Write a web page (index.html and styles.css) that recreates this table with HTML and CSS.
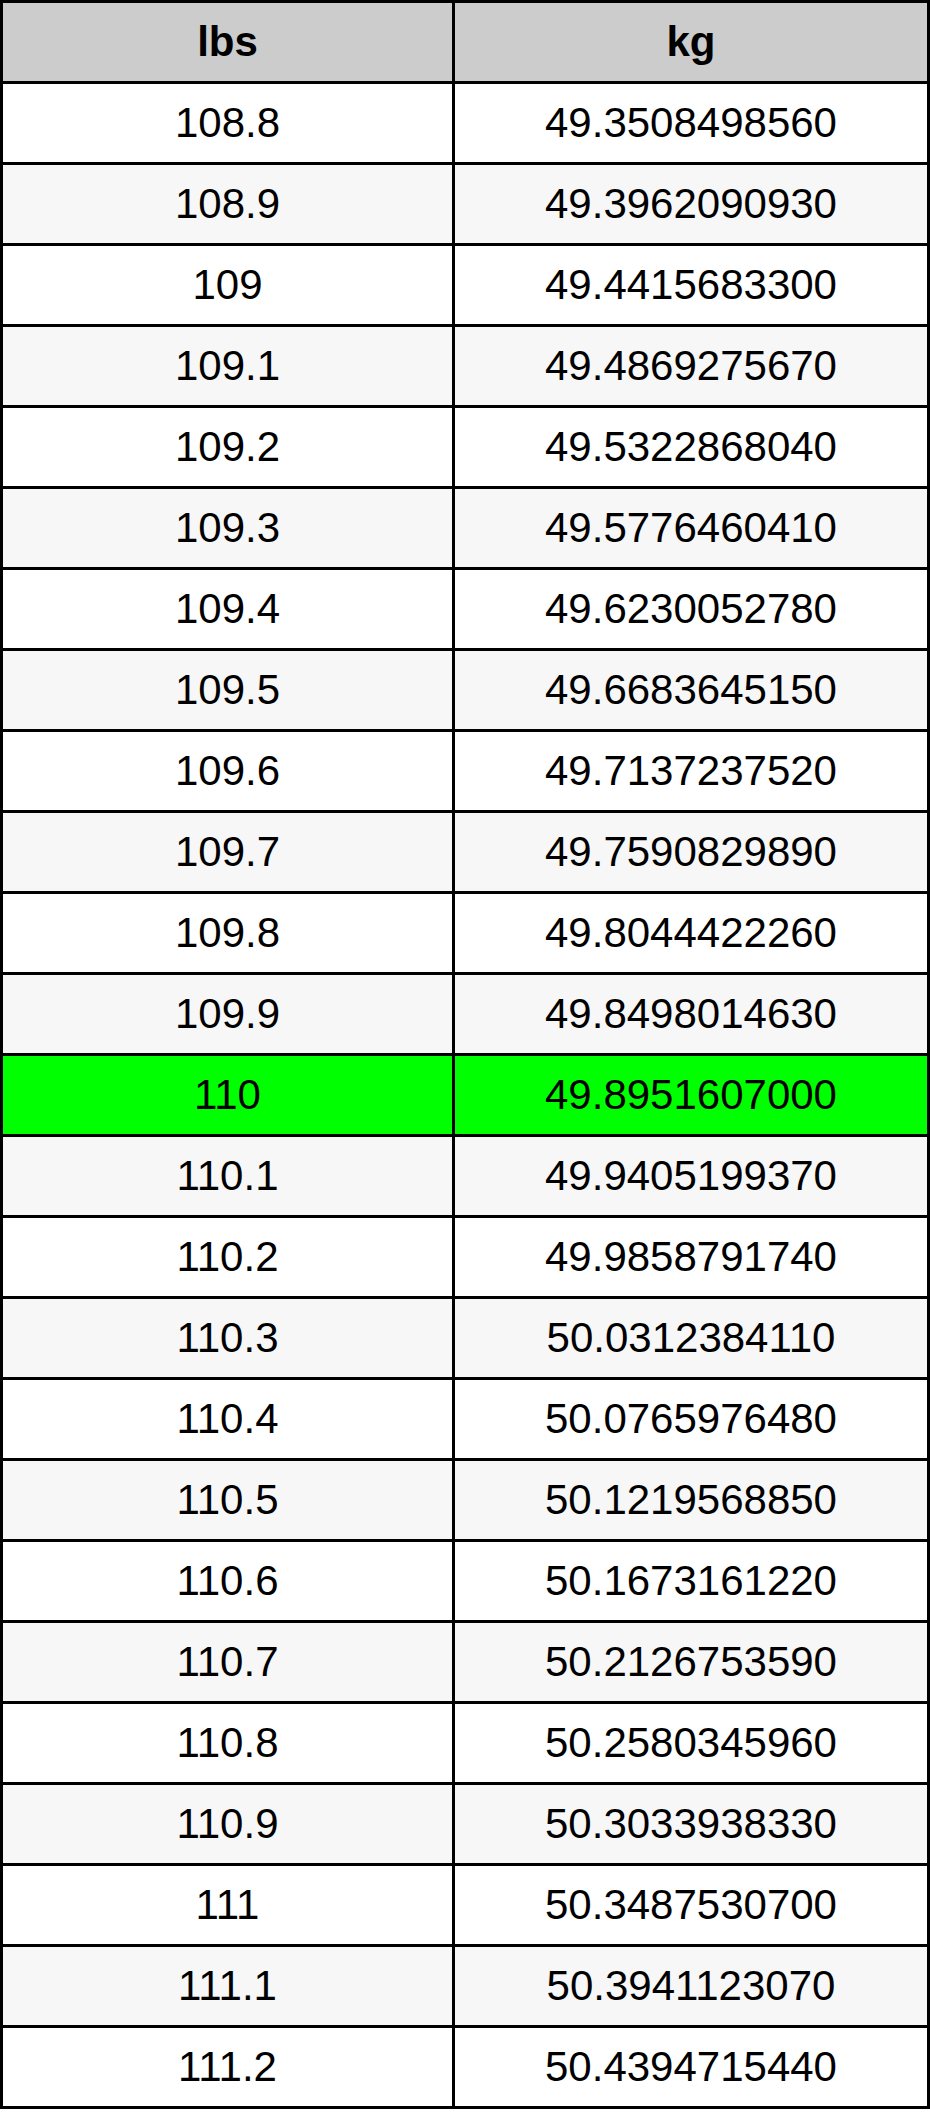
FILE: index.html
```html
<!DOCTYPE html>
<html lang="en">
<head>
<meta charset="utf-8">
<title>lbs to kg</title>
<link rel="stylesheet" href="styles.css">
</head>
<body>
<table class="conv">
<thead>
<tr><th class="c1">lbs</th><th class="c2">kg</th></tr>
</thead>
<tbody>
<tr><td>108.8</td><td>49.3508498560</td></tr>
<tr class="alt"><td>108.9</td><td>49.3962090930</td></tr>
<tr><td>109</td><td>49.4415683300</td></tr>
<tr class="alt"><td>109.1</td><td>49.4869275670</td></tr>
<tr><td>109.2</td><td>49.5322868040</td></tr>
<tr class="alt"><td>109.3</td><td>49.5776460410</td></tr>
<tr><td>109.4</td><td>49.6230052780</td></tr>
<tr class="alt"><td>109.5</td><td>49.6683645150</td></tr>
<tr><td>109.6</td><td>49.7137237520</td></tr>
<tr class="alt"><td>109.7</td><td>49.7590829890</td></tr>
<tr><td>109.8</td><td>49.8044422260</td></tr>
<tr class="alt"><td>109.9</td><td>49.8498014630</td></tr>
<tr class="hl"><td>110</td><td>49.8951607000</td></tr>
<tr class="alt"><td>110.1</td><td>49.9405199370</td></tr>
<tr><td>110.2</td><td>49.9858791740</td></tr>
<tr class="alt"><td>110.3</td><td>50.0312384110</td></tr>
<tr><td>110.4</td><td>50.0765976480</td></tr>
<tr class="alt"><td>110.5</td><td>50.1219568850</td></tr>
<tr><td>110.6</td><td>50.1673161220</td></tr>
<tr class="alt"><td>110.7</td><td>50.2126753590</td></tr>
<tr><td>110.8</td><td>50.2580345960</td></tr>
<tr class="alt"><td>110.9</td><td>50.3033938330</td></tr>
<tr><td>111</td><td>50.3487530700</td></tr>
<tr class="alt"><td>111.1</td><td>50.3941123070</td></tr>
<tr><td>111.2</td><td>50.4394715440</td></tr>
</tbody>
</table>
</body>
</html>
```
FILE: styles.css
```css
html, body {
  margin: 0;
  padding: 0;
  background: #ffffff;
}

.conv {
  width: 930px;
  table-layout: fixed;
  border-collapse: separate;
  border-spacing: 0;
  border-top: 3px solid #000;
  border-left: 3px solid #000;
  font-family: "Liberation Sans", Arial, sans-serif;
  font-size: 42px;
  color: #000;
}

.conv th,
.conv td {
  box-sizing: border-box;
  height: 81px;
  padding: 0;
  border-right: 3px solid #000;
  border-bottom: 3px solid #000;
  text-align: center;
  vertical-align: middle;
  line-height: 1;
}

.conv th {
  background: #cccccc;
  font-weight: bold;
}

.conv .c1 {
  width: 452px;
}

.conv .c2 {
  width: 475px;
}

.conv tr.alt td {
  background: #f7f7f7;
}

.conv tr.hl td {
  background: #00ff00;
}
```
